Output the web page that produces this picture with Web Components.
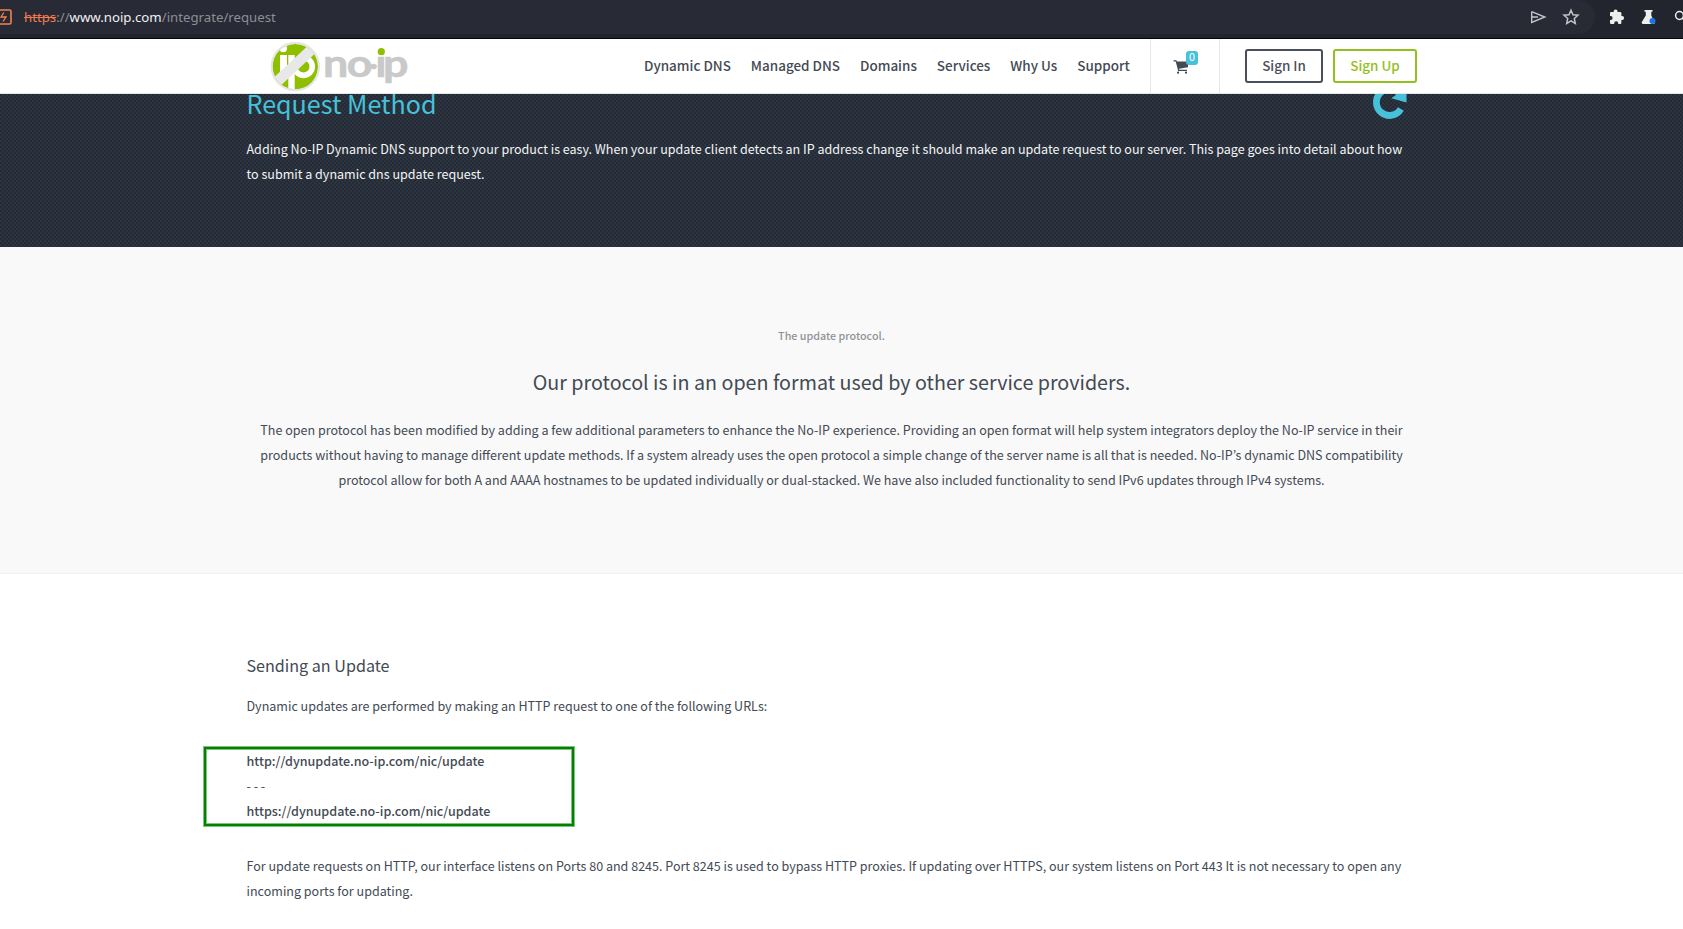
<!DOCTYPE html>
<html lang="en">
<head>
<meta charset="utf-8">
<title>Request Method - No-IP</title>
<style>
html,body{margin:0;padding:0}
body{width:1683px;height:929px;overflow:hidden;background:#fff;color:#434a54;font:400 12.54px/25px "Noto Sans CJK JP","Noto Sans",sans-serif}
</style>
</head>
<body>
<noip-page></noip-page>
<script>
const define=(name,html)=>customElements.define(name,class extends HTMLElement{
  constructor(){super();this.attachShadow({mode:'open'}).innerHTML=html;}
});

define('browser-bar',`
<style>
:host{display:flex;height:39px;box-sizing:border-box;background:#22252e;border-bottom:1px solid #050608}
.bar{flex:none;width:1595px;height:34px;background:#282a36;border-radius:0 17px 17px 0;display:flex;align-items:center;box-sizing:border-box}
.warn{flex:none;width:12px;height:18px;margin-right:12px}
.url{font:13.22px/18px "Noto Sans",sans-serif;color:#8c8e94;white-space:pre;flex:1;padding-bottom:1px}
s{color:#f07b4f}b{font-weight:400;color:#f1f1f3}
.send{margin-right:15px}.star{margin-right:15px}
.ext{display:flex;align-items:center;height:34px;flex:none;width:88px;overflow:hidden}
svg{display:block;flex:none}
</style>
<div class="bar">
<svg class="warn" viewBox="0 0 12 18" fill="none" stroke="#f5814f"><rect x="-4" y="2" width="15" height="14" rx="1.5" stroke-width="1.6"/><path d="M3.8 4.5 1 9H6L3 13.5" stroke-width="1.3"/></svg>
<div class="url"><s>https</s>://<b>www.noip.com</b>/integrate/request</div>
<svg class="send" width="18" height="16" viewBox="0 0 18 16" fill="none" stroke="#c3c4c7" stroke-width="1.4"><path d="M2.7 2.600 15.800 8 2.700 13.400V2.600M2.700 8H9"/></svg>
<svg class="star" width="18" height="18" viewBox="0 0 18 18" fill="none" stroke="#c3c4c7" stroke-width="1.5"><path d="m9 2.2 2 4.500 5 .5-3.700 3.300 1 4.900L9 12.900l-4.300 2.500 1-4.900L2 7.200l5-.5z"/></svg>
</div>
<div class="ext">
<svg style="margin-left:14px" width="16" height="18" viewBox="0 0 16 18" fill="#eee"><path d="M1 5.2C1 4.3 1.5 4 2.2 4H4.600V3.500a2 2 0 0 1 4 0V4h2.600q1.200 0 1.200 1.200V8h.7a2 2 0 0 1 0 4h-.7v2.800q0 1.200-1.200 1.200H9.200v-.7a2 2 0 0 0-4 0v.7H2.200Q1 16 1 14.800V12h.6a2 2 0 0 0 0-4H1z"/></svg>
<svg style="margin-left:16px" width="16" height="18" viewBox="0 0 16 18"><path d="M3.500 2h8v1.700H10.300V7.500L14 15.500H13V16H1.500L.5 14.500 4.800 7.500V3.700H3.500z" fill="#eee"/><circle cx="11.500" cy="13" r="3" fill="#1a73e8"/></svg>
<svg style="margin-left:17px" width="12" height="18" viewBox="0 0 12 18" fill="none" stroke="#eee" stroke-width="1.500"><circle cx="5.500" cy="7.500" r="3.900"/><path d="m8.500 10.500 4 4"/></svg>
</div>`);

define('noip-logo',`
<style>:host{display:block;width:140px;height:54px}svg{display:block;overflow:visible}</style>
<svg width="140" height="54" viewBox="271 39 140 54" role="img">
<defs><clipPath id="disc"><circle cx="295.300" cy="66.600" r="22.700"/></clipPath></defs>
<circle cx="295.300" cy="66.600" r="24.600" fill="#e6e6e6"/>
<circle cx="295.300" cy="66.600" r="22.700" fill="#8fc000"/>
<g clip-path="url(#disc)">
<circle cx="283.300" cy="48.500" r="3.700" fill="#fff"/>
<rect x="280" y="55" width="7" height="24" fill="#fff"/>
<rect x="288.300" y="55" width="6.400" height="38" fill="#fff"/>
<circle cx="303.500" cy="66.600" r="8.800" fill="none" stroke="#fff" stroke-width="5.600"/>
<path d="M271 87.500 319 42.500" stroke="#e8e8e8" stroke-width="10.500"/>
</g>
<circle cx="295.300" cy="66.600" r="23.600" fill="none" stroke="#e6e6e6" stroke-width="1.800"/>
<text transform="scale(1.15 1)" y="77.200" font-family="Lato" font-weight="700" font-size="39" fill="#c9c9c9" stroke="#c9c9c9" stroke-width=".6"><tspan x="280.800">n</tspan><tspan x="301.600">o</tspan><tspan x="321" font-size="27" dy="-2.500">·</tspan><tspan x="326.200" dy="2.500">i</tspan><tspan x="333">p</tspan></text>
<rect x="376" y="45" width="11" height="11" fill="#fff"/>
<circle cx="381.300" cy="51.700" r="3.600" fill="#8fc000"/>
</svg>`);

define('nav-button',`
<style>:host{display:flex;box-sizing:border-box;height:34px;border:2px solid var(--c);border-radius:3px;color:var(--c);align-items:center;justify-content:center;font-weight:500;font-size:13.43px;line-height:28px;padding-bottom:2px;white-space:nowrap}</style><slot></slot>`);

define('cart-box',`
<style>
:host{display:block;position:relative;box-sizing:border-box;width:70px;height:54px;border:solid #e7e7e8;border-width:0 1px}
svg{position:absolute;left:22px;top:20px}
span{position:absolute;left:35px;top:12px;width:12px;height:14px;border-radius:3px;background:#47c1da;color:#fff;text-align:center;font:400 10.740px/12px "Noto Sans CJK JP",sans-serif}
</style>
<svg width="17" height="16" viewBox="0 0 17 16" fill="#434a54"><path d="M.3 1.200H3.300L4 2.500H15V8.300L6 9.700 6.300 10.800H14V12H5.200L2.700 2.500H.8z"/><circle cx="5.100" cy="13.700" r="1.100"/><circle cx="13" cy="13.700" r="1.100"/></svg>
<span>0</span>`);

define('site-header',`
<style>
:host{display:flex;position:relative;z-index:1;height:55px;box-sizing:border-box;background:#fff;border-bottom:1px solid #e4e5e6;padding-left:271px}
nav{display:flex;gap:20px;margin-left:233px;width:506px;height:54px;align-items:center;font-weight:500;font-size:13.46px;line-height:52px;padding-bottom:2px;box-sizing:border-box;white-space:nowrap;color:#434a54;flex:none}
cart-box{flex:none}
.in{--c:#4a4e5a;width:78px;margin:10px 10px 0 25px}.up{--c:#93c021;width:84px;margin-top:10px}
</style>
<noip-logo></noip-logo>
<nav><span>Dynamic DNS</span><span>Managed DNS</span><span>Domains</span><span>Services</span><span>Why Us</span><span>Support</span></nav>
<cart-box></cart-box>
<nav-button class="in">Sign In</nav-button><nav-button class="up">Sign Up</nav-button>`);

define('page-hero',`
<style>
:host{display:block;height:153px;box-sizing:border-box;padding-left:246.500px;color:#f3f4f5;background:conic-gradient(#2d3540 25%,#242b36 0 50%,#2d3540 0 75%,#242b36 0) 0 0/4px 4px}
.row{display:flex;height:42px;width:1160px;justify-content:space-between}
h1{margin:0;font-weight:400;font-size:25.100px;line-height:18px;color:#47c1da;white-space:nowrap}
svg{display:block;margin-top:-10px}
p{margin:0;white-space:nowrap}
</style>
<div class="row"><h1><slot name="title"></slot></h1>
<svg width="35" height="36" viewBox="1372.500 84 35 36"><path d="M1401.400 109.100A13.200 13.200 0 1 1 1400 93.500" fill="none" stroke="#47c1da" stroke-width="6.800"/><path d="M1407 87.500V102.400L1391.800 98.200z" fill="#47c1da"/></svg></div>
<p><slot></slot></p>`);

define('protocol-intro',`
<style>
:host{display:block;box-sizing:border-box;height:327px;padding:76px 20px 0 0;background:#f9f9f9;border-bottom:1px solid #f0f0f0;text-align:center;white-space:nowrap}
h5{margin:0;font-weight:500;font-size:10.740px;line-height:25px;color:#8f949b}
h2{margin:17px 0 0;font-weight:400;font-size:19.690px;line-height:34px}
p{margin:18px 0 0}
</style>
<h5><slot name="kicker"></slot></h5><h2><slot name="title"></slot></h2><p><slot></slot></p>`);

define('url-box',`
<style>
:host{display:block;box-sizing:border-box;width:370px;height:79px;margin:29px 0 0 -42.500px;padding:0 0 0 40.500px;border:2px solid #008200;box-shadow:0 0 0 1px #80c080,inset 0 0 0 1px #80c080}
div{margin-top:-1px}
</style><div><slot></slot></div>`);

define('update-section',`
<style>
:host{display:block;padding:76px 0 0 246.500px;white-space:nowrap}
h3{margin:0;font-weight:400;font-size:16.110px;line-height:30px}
p{margin:13px 0 0}
.last{margin-top:27px}
</style>
<h3><slot name="title"></slot></h3><p><slot name="lead"></slot></p><slot name="urls"></slot><p class="last"><slot></slot></p>`);

define('noip-page',`
<style>:host{display:flex;flex-direction:column;width:1683px}url-box b{font-weight:500;font-size:12.560px}</style>
<browser-bar></browser-bar>
<site-header></site-header>
<page-hero><span slot="title">Request Method</span>Adding No-IP Dynamic DNS support to your product is easy. When your update client detects an IP address change it should make an update request to our server. This page goes into detail about how<br>to submit a dynamic dns update request.</page-hero>
<protocol-intro><span slot="kicker">The update protocol.</span><span slot="title">Our protocol is in an open format used by other service providers.</span>The open protocol has been modified by adding a few additional parameters to enhance the No-IP experience. Providing an open format will help system integrators deploy the No-IP service in their<br>products without having to manage different update methods. If a system already uses the open protocol a simple change of the server name is all that is needed. No-IP’s dynamic DNS compatibility<br>protocol allow for both A and AAAA hostnames to be updated individually or dual-stacked. We have also included functionality to send IPv6 updates through IPv4 systems.</protocol-intro>
<update-section><span slot="title">Sending an Update</span><span slot="lead">Dynamic updates are performed by making an HTTP request to one of the following URLs:</span>
<url-box slot="urls"><b>http://dynupdate.no-ip.com/nic/update</b><br>- - -<br><b>https://dynupdate.no-ip.com/nic/update</b></url-box>For update requests on HTTP, our interface listens on Ports 80 and 8245. Port 8245 is used to bypass HTTP proxies. If updating over HTTPS, our system listens on Port 443 It is not necessary to open any<br>incoming ports for updating.</update-section>`);
</script>
</body>
</html>
